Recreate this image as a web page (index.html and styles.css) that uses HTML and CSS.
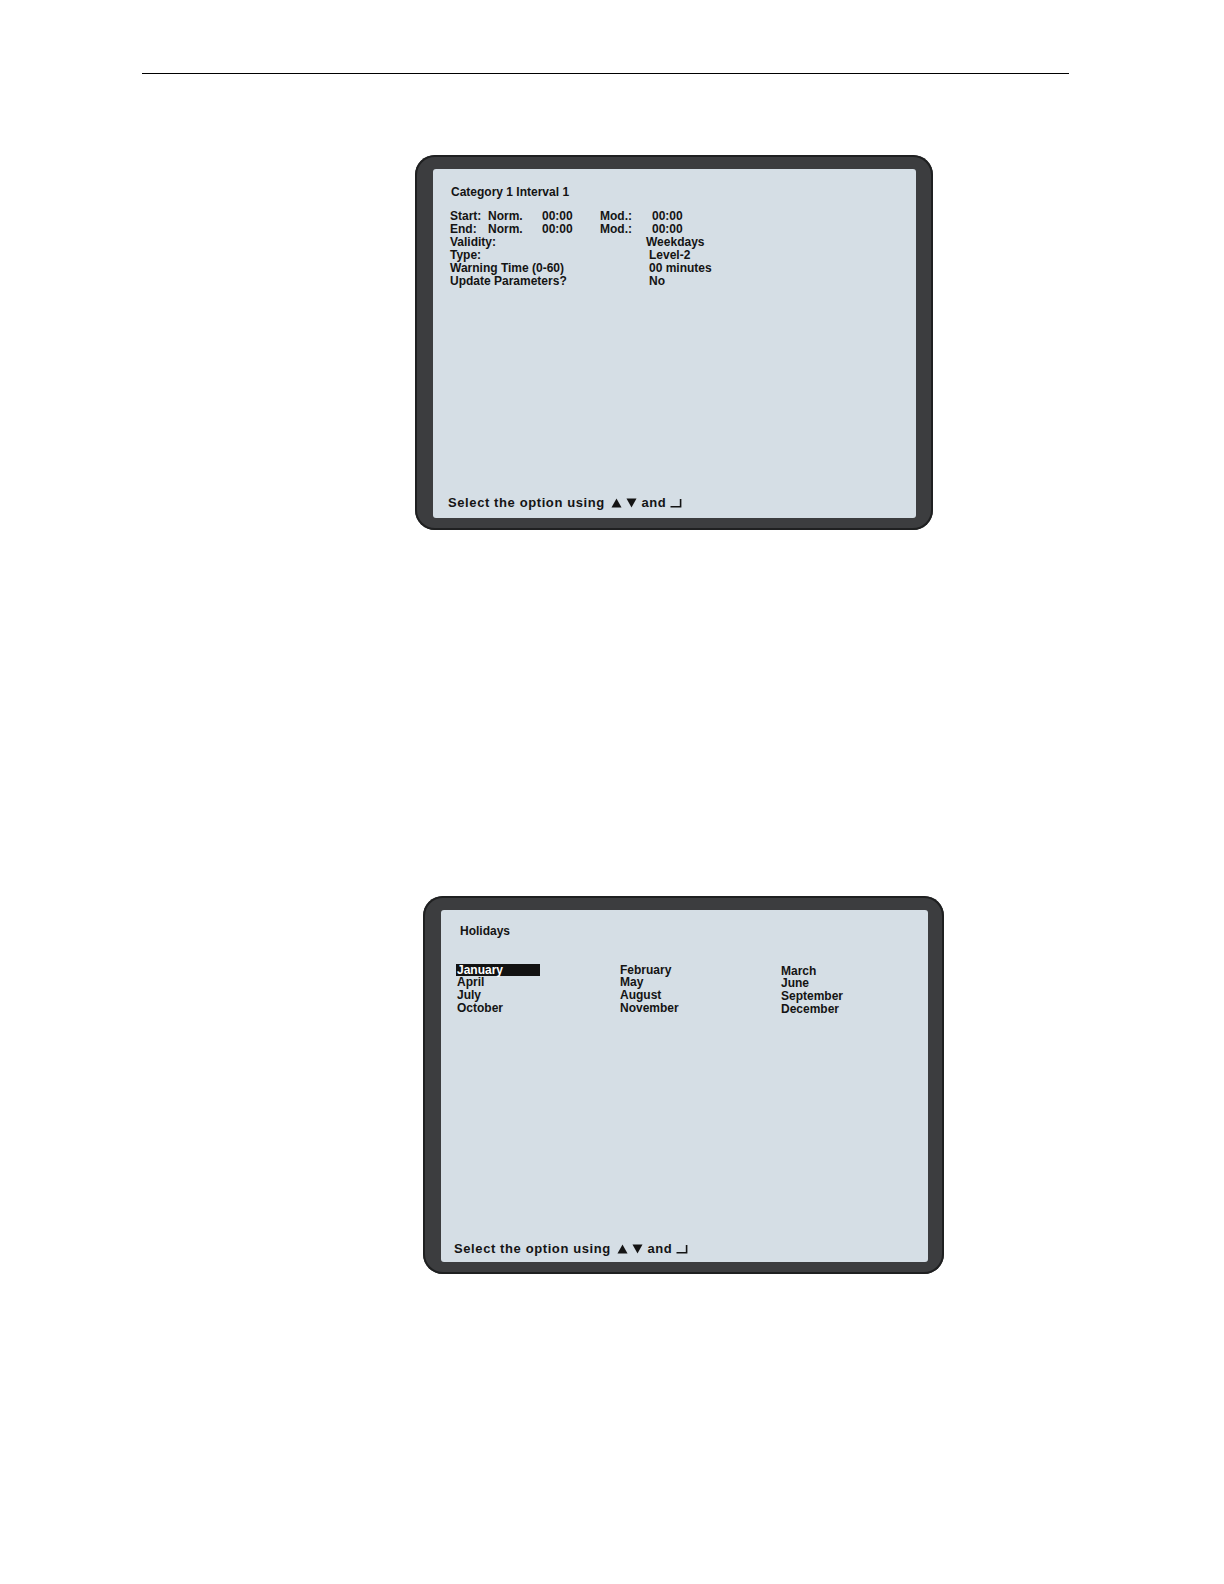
FILE: index.html
```html
<!DOCTYPE html>
<html>
<head>
<meta charset="utf-8">
<link rel="stylesheet" href="styles.css">
</head>
<body>
<div class="page">
<div class="rule"></div>

<div class="screen screen-a">
  <div class="panel panel-a">
    <div class="title">Category 1 Interval 1</div>
    <div class="params">
      <div class="trow"><span>Start:</span><span>Norm.</span><span>00:00</span><span>Mod.:</span><span>00:00</span></div>
      <div class="trow"><span>End:</span><span>Norm.</span><span>00:00</span><span>Mod.:</span><span>00:00</span></div>
      <div class="prow"><span class="lbl">Validity:</span><span class="val val-w">Weekdays</span></div>
      <div class="prow"><span class="lbl">Type:</span><span class="val">Level-2</span></div>
      <div class="prow"><span class="lbl">Warning Time (0-60)</span><span class="val">00 minutes</span></div>
      <div class="prow"><span class="lbl">Update Parameters?</span><span class="val">No</span></div>
    </div>
    <div class="footer">Select the option using <svg class="tri up" width="11" height="10" viewBox="0 0 11 10"><path d="M5.5 0.5 L10.5 9.5 H0.5 Z" fill="#141414"/></svg> <svg class="tri" width="11" height="10" viewBox="0 0 11 10"><path d="M0.5 0.5 H10.5 L5.5 9.5 Z" fill="#141414"/></svg> and<svg class="enter" width="12" height="11" viewBox="0 0 12 11"><path d="M0.5 9.8 H10.6 V2" fill="none" stroke="#141414" stroke-width="1.6"/></svg></div>
  </div>
</div>

<div class="screen screen-b">
  <div class="panel panel-b">
    <div class="title title-b">Holidays</div>
    <div class="months">
      <div class="mcol">
        <span class="sel">January</span>
        <span>April</span>
        <span>July</span>
        <span>October</span>
      </div>
      <div class="mcol">
        <span>February</span>
        <span>May</span>
        <span>August</span>
        <span>November</span>
      </div>
      <div class="mcol mcol-3">
        <span>March</span>
        <span>June</span>
        <span>September</span>
        <span>December</span>
      </div>
    </div>
    <div class="footer footer-b">Select the option using <svg class="tri up" width="11" height="10" viewBox="0 0 11 10"><path d="M5.5 0.5 L10.5 9.5 H0.5 Z" fill="#141414"/></svg> <svg class="tri" width="11" height="10" viewBox="0 0 11 10"><path d="M0.5 0.5 H10.5 L5.5 9.5 Z" fill="#141414"/></svg> and<svg class="enter" width="12" height="11" viewBox="0 0 12 11"><path d="M0.5 9.8 H10.6 V2" fill="none" stroke="#141414" stroke-width="1.6"/></svg></div>
  </div>
</div>
</div>
</body>
</html>
```

FILE: styles.css
```css
html, body {
  margin: 0;
  padding: 0;
  background: #ffffff;
}

body {
  font-family: "Liberation Sans", Arial, sans-serif;
  color: #141414;
}

.page {
  padding-top: 73px;
  padding-bottom: 1px;
}

.rule {
  margin: 0 0 0 142px;
  width: 927px;
  height: 0;
  border-top: 1.5px solid #000;
}

.screen {
  box-sizing: border-box;
  background: #3c3d3f;
  border-radius: 20px;
  box-shadow: inset 0 0 0 2px #1f2021;
  padding: 14px 17px 12px 18px;
}

.screen-a {
  margin: 81px 0 0 415px;
  width: 518px;
  height: 375px;
}

.screen-b {
  margin: 366px 0 0 423px;
  width: 521px;
  height: 378px;
  padding-right: 16px;
}

.panel {
  box-sizing: border-box;
  height: 100%;
  background: #d5dee5;
  border-radius: 3px;
  display: flex;
  flex-direction: column;
}

.panel-a {
  padding: 17px 0 8px 17px;
}

.title {
  font-size: 12px;
  font-weight: bold;
  line-height: 13px;
  padding-left: 1px;
}

.params {
  margin-top: 11px;
  font-size: 12px;
  font-weight: bold;
  line-height: 13px;
}

.trow {
  display: grid;
  grid-template-columns: 38px 54px 58px 52px auto;
}

.prow {
  display: flex;
}

.lbl {
  width: 199px;
}

.val-w {
  margin-left: -3px;
}

.footer {
  margin-top: auto;
  font-size: 13px;
  font-weight: bold;
  line-height: 14px;
  letter-spacing: 0.6px;
  margin-left: -2px;
  white-space: nowrap;
}

.tri {
  vertical-align: -1px;
}

.tri.up {
  margin-left: 2px;
}

.enter {
  vertical-align: -1px;
  margin-left: 4px;
}

.panel-b {
  padding: 14.5px 0 6px 13px;
}

.title-b {
  padding-left: 6px;
}

.months {
  margin-top: 26px;
  padding-left: 3px;
  display: grid;
  grid-template-columns: 163px 161px auto;
  font-size: 12px;
  font-weight: bold;
  line-height: 12.7px;
}

.mcol {
  display: flex;
  flex-direction: column;
  align-items: flex-start;
}

.mcol-3 {
  margin-top: 1px;
}

.sel {
  background: #121212;
  color: #ffffff;
  width: 83px;
  margin-left: -1px;
  padding-left: 1px;
}

.footer-b {
  margin-left: 0;
}
```
